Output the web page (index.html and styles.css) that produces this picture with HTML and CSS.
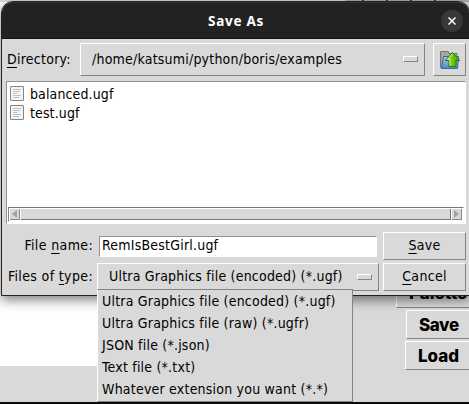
FILE: index.html
```html
<!DOCTYPE html>
<html lang="en">
<head>
<meta charset="utf-8">
<title>Save As</title>
<link rel="stylesheet" href="styles.css">
</head>
<body>
<main class="desktop">
  <div class="top-strip"><i></i><i></i><i></i><i></i></div>
  <div class="canvas"></div>
  <div class="bottom-strip"></div>
  <div class="tool-buttons">
    <div class="tool palette">Palette</div>
    <div class="tool save">Save</div>
    <div class="tool load">Load</div>
  </div>

  <section class="dialog">
    <header class="titlebar">
      <h1>Save As</h1>
      <button class="close" aria-label="Close"><svg width="8" height="8" viewBox="0 0 8 8"><path d="M.5.5l7 7M7.500.5l-7 7" stroke="#fff" stroke-width="1.500"/></svg></button>
    </header>
    <div class="content">
      <div class="directory">
        <label><u>D</u>irectory:</label>
        <div class="raised select path"><span>/home/katsumi/python/boris/examples</span><i class="indicator"></i></div>
        <button class="raised up" aria-label="Up">
          <svg width="22" height="20" viewBox="0 0 22 20">
            <defs>
              <linearGradient id="blue" x2="0" y2="1"><stop stop-color="#a6caee"/><stop offset="1" stop-color="#5187c9"/></linearGradient>
              <linearGradient id="green"><stop stop-color="#c5ee78"/><stop offset=".55" stop-color="#62c50c"/><stop offset="1" stop-color="#429b06"/></linearGradient>
            </defs>
            <path d="M1.500 17.500V2q0-.5.5-.5h7q.5 0 .5.5v1.500h8.500V17.500z" fill="#a5a8a4" stroke="#72756f"/>
            <path d="M4.500 6.500H19.500L18.500 18.500H2.500z" fill="url(#blue)" stroke="#3668a6"/>
            <path d="M13.500 2.300L20.700 10.500H17V16.500H10V10.500H6.300z" fill="url(#green)" stroke="#327900"/>
            <path d="M13.500 4L8.500 9.500H11V15.500" fill="none" stroke="#d2f58f" stroke-width=".8"/>
          </svg>
        </button>
      </div>
      <div class="listbox">
        <ul>
          <li><svg width="14" height="15" viewBox="0 0 14 15"><rect x=".5" y=".5" width="13" height="14" rx=".5" fill="#f4f4f4" stroke="#858585"/><path d="M3 3.500h8M3 5.500h7M3 7.500h4M3 9.500h8M3 11.500h6" stroke="#c2c2c2"/></svg><span>balanced.ugf</span></li>
          <li><svg width="14" height="15" viewBox="0 0 14 15"><rect x=".5" y=".5" width="13" height="14" rx=".5" fill="#f4f4f4" stroke="#858585"/><path d="M3 3.500h8M3 5.500h7M3 7.500h4M3 9.500h8M3 11.500h6" stroke="#c2c2c2"/></svg><span>test.ugf</span></li>
        </ul>
        <div class="scrollbar">
          <div class="arrow"><svg width="5" height="8" viewBox="0 0 5 8"><path d="M5 0v8L0 4z" fill="#a3a3a3"/></svg></div>
          <div class="thumb"></div>
          <div class="arrow"><svg width="5" height="8" viewBox="0 0 5 8"><path d="M0 0v8l5-4z" fill="#a3a3a3"/></svg></div>
        </div>
      </div>
      <div class="form">
        <label>File <u>n</u>ame:</label>
        <div class="entry"><span>RemIsBestGirl.ugf</span></div>
        <button class="raised"><span><u>S</u>ave</span></button>
        <label>Files of <u>t</u>ype:</label>
        <div class="raised select"><span>Ultra Graphics file (encoded) (*.ugf)</span><i class="indicator"></i></div>
        <button class="raised"><span><u>C</u>ancel</span></button>
      </div>
    </div>
  </section>

  <ul class="menu">
    <li>Ultra Graphics file (encoded) (*.ugf)</li>
    <li>Ultra Graphics file (raw) (*.ugfr)</li>
    <li>JSON file (*.json)</li>
    <li>Text file (*.txt)</li>
    <li>Whatever extension you want (*.*)</li>
  </ul>
</main>
</body>
</html>
```
FILE: styles.css
```css
* { box-sizing: border-box; }
body { margin: 0; overflow: hidden; }
h1, ul { margin: 0; padding: 0; }
ul { list-style: none; }
button { padding: 0; color: inherit; font: inherit; letter-spacing: inherit; }

.desktop {
  position: relative;
  display: flex;
  flex-direction: column;
  width: 469px;
  height: 404px;
  overflow: hidden;
  background: #d9d9d9;
  color: #000;
  font: 14px/18px "DejaVu Sans Condensed", "DejaVu Sans", sans-serif;
  font-stretch: condensed;
  letter-spacing: .21px;
  white-space: nowrap;
}
u { text-decoration-thickness: 1px; text-underline-offset: 3px; text-decoration-skip-ink: none; }

.top-strip { display: flex; gap: 22px; height: 2px; padding-left: 362px; background: linear-gradient(90deg, #d8dcda 345px, #aaa 345px); }
.top-strip i { width: 2px; height: 1px; background: #333; }
.canvas { width: 300px; height: 364px; background: #fff; }
.bottom-strip { height: 2px; margin-top: auto; background: #09090b; }

.tool-buttons { position: absolute; top: 279px; right: -7px; display: flex; flex-direction: column; align-items: flex-end; gap: 2px; }
.tool {
  height: 29px;
  border: 1px solid;
  border-color: #fff #858585 #858585 #fff;
  font: 800 17px/28px Inter, sans-serif;
  letter-spacing: 0;
}
.palette { width: 80px; padding-left: 12px; line-height: 27px; }
.save { width: 70px; padding-left: 12px; letter-spacing: -.4px; }
.load { width: 71px; padding-left: 12px; }

.dialog {
  position: absolute;
  left: 1px;
  top: 1px;
  width: 469px;
  height: 295px;
  border: 1px solid #222;
  border-radius: 12px 12px 0 0;
  background: #d9d9d9;
  box-shadow: 0 4px 12px rgba(0, 0, 0, .5);
}
.titlebar {
  display: grid;
  grid-template-columns: 1fr 22px;
  align-items: center;
  height: 37px;
  padding-right: 6px;
  border-top: 1px solid #303431;
  border-bottom: 1px solid #141014;
  border-radius: 11px 11px 0 0;
  background: #222;
  color: #fff;
}
.titlebar h1 { padding-left: 29px; text-align: center; font: bold 13.500px/18px "Noto Sans", sans-serif; letter-spacing: .7px; }
.close { display: grid; place-items: center; width: 22px; height: 22px; border: 0; border-radius: 50%; background: #383838; }

.content { padding: 4px 3px 0 4px; }
.raised { border: 1px solid; border-color: #fff #858585 #858585 #fff; background: #d9d9d9; }
.directory { display: grid; grid-template-columns: 66px 345px 33px; column-gap: 8px; align-items: center; height: 33px; }
.directory label { padding: 0 0 2px 1px; letter-spacing: .25px; }
.select { display: flex; align-items: center; justify-content: space-between; height: 28px; padding: 0 6px 0 11px; }
.path { height: 33px; }
.select span { padding-bottom: 2px; }
.indicator { width: 15px; height: 6px; border: 1px solid; border-color: #fff #858585 #858585 #fff; }
.path .indicator { margin-bottom: 1px; }
.up { display: grid; place-items: center; height: 33px; }

.listbox {
  display: flex;
  flex-direction: column;
  justify-content: space-between;
  height: 143px;
  margin-top: 5px;
  padding: 2px 1px 1px;
  border: 1px solid;
  border-color: #909090 #fff #fff #909090;
  background: #fff;
}
.listbox li { display: flex; align-items: center; gap: 6px; height: 19px; padding-left: 2px; letter-spacing: .12px; }
.scrollbar { display: flex; gap: 1px; height: 15px; padding: 1px; border: 1px solid; border-color: #777 #fff #fff #858585; background: #fff; }
.arrow { display: grid; place-items: center; width: 10px; border-right: 1px solid #858585; border-bottom: 1px solid #858585; background: #d9d9d9; }
.thumb { flex: 1; border-right: 1px solid #777; border-bottom: 1px solid #777; background: #d9d9d9; }

.form { display: grid; grid-template-columns: 87px 282px 83px; grid-template-rows: 28px 28px; gap: 3px 4px; align-items: center; margin-top: 8px; }
.form label { padding-bottom: 2px; text-align: right; letter-spacing: .36px; }
.form button { height: 28px; padding-bottom: 2px; letter-spacing: .3px; }
.entry { display: flex; align-items: center; height: 21px; margin: 0 2px; padding: 0 0 2px 2px; border: 1px solid; border-color: #909090 #fff #fff #909090; background: #fff; }

.menu {
  position: absolute;
  left: 97px;
  top: 289px;
  width: 256px;
  height: 113px;
  padding-left: 4px;
  border: 1px solid;
  border-color: #858585 #858585 #858585 #fff;
  background: #d9d9d9;
  line-height: 22px;
}
```
